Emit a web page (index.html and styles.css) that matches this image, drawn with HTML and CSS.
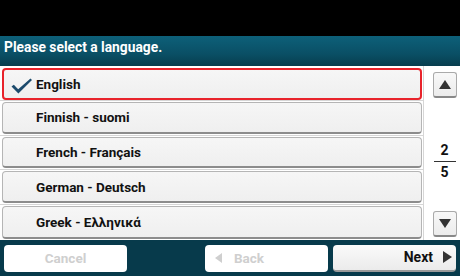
FILE: index.html
```html
<!DOCTYPE html>
<html lang="en">
<head>
    <meta charset="UTF-8">
    <title>Language</title>
    <link rel="stylesheet" href="styles.css">
</head>
<body>
    <div class="screen">
        <div class="status-bar"></div>
        <div class="title-bar">Please select a language.</div>

        <div class="content">
            <div class="lang-list">
                <div class="lang-cell">
                    <a href="#" class="lang-btn selected">
                        <svg class="check" width="22" height="16" viewBox="0 0 22 16">
                            <path d="M0.5 8.5 L2.8 6.8 L7.2 11.2 L19.5 0.5 L21 2 L7.4 15.5 Z" fill="#1c4a6c"/>
                        </svg>
                        English
                    </a>
                </div>
                <div class="lang-cell"><a href="#" class="lang-btn">Finnish - suomi</a></div>
                <div class="lang-cell"><a href="#" class="lang-btn">French - Français</a></div>
                <div class="lang-cell"><a href="#" class="lang-btn">German - Deutsch</a></div>
                <div class="lang-cell"><a href="#" class="lang-btn">Greek - Ελληνικά</a></div>
            </div>

            <div class="scroll-col">
                <a href="#" class="scroll-btn"><span class="tri-up"></span></a>
                <div class="page-num">
                    <span>2</span>
                    <span class="page-total">5</span>
                </div>
                <a href="#" class="scroll-btn"><span class="tri-down"></span></a>
            </div>
        </div>

        <div class="footer">
            <a href="#" class="foot-btn disabled">Cancel</a>
            <span class="foot-spacer"></span>
            <a href="#" class="foot-btn disabled back"><span class="tri-left"></span>Back</a>
            <a href="#" class="foot-btn next">Next<span class="tri-right"></span></a>
        </div>
    </div>
</body>
</html>
```

FILE: styles.css
```css
* {
    margin: 0;
    padding: 0;
    box-sizing: border-box;
}

body {
    font-family: Roboto, 'Liberation Sans', Arial, sans-serif;
    background: #000;
    width: 460px;
    height: 276px;
    overflow: hidden;
}

a {
    text-decoration: none;
    color: inherit;
}

.screen {
    display: flex;
    flex-direction: column;
    height: 276px;
}

.status-bar {
    height: 36px;
    background: #000;
}

.title-bar {
    height: 30px;
    padding: 3px 0 0 4px;
    color: #fff;
    font-weight: bold;
    font-size: 13.8px;
    background: linear-gradient(#0d6079, #0a4f65 60%, #073d4e);
}

.content {
    display: flex;
    background: #fff;
    height: 174px;
}

.lang-list {
    width: 424px;
    border-right: 1px solid #d6d6d6;
    display: flex;
    flex-direction: column;
}

.lang-cell {
    height: 35px;
    padding: 1px 1px 1px 2px;
    border-bottom: 1px solid #d6d6d6;
}

.lang-cell:first-child {
    padding-top: 2px;
    padding-bottom: 0;
}

.lang-cell:last-child {
    border-bottom: none;
}

.lang-btn {
    display: flex;
    align-items: center;
    height: 100%;
    padding-left: 33px;
    background: linear-gradient(#f6f6f6, #efefef);
    border: 1px solid #b5b5b5;
    border-bottom: 2px solid #8c8c8c;
    border-radius: 4px;
    font-weight: bold;
    font-size: 13.5px;
    color: #111;
    position: relative;
}

.lang-btn.selected {
    border: 2px solid #e8232b;
    padding-left: 32px;
}

.check {
    position: absolute;
    left: 7px;
    top: 8px;
}

.scroll-col {
    flex: 1;
    display: flex;
    flex-direction: column;
    align-items: center;
    justify-content: space-between;
    padding: 6px 0 3px 5px;
}

.scroll-btn {
    width: 24px;
    height: 26px;
    display: flex;
    align-items: center;
    justify-content: center;
    background: linear-gradient(#f8f8f8, #ececec);
    border: 1px solid #aaa;
    border-bottom: 2px solid #888;
    border-radius: 3px;
}

.tri-up {
    border-left: 6px solid transparent;
    border-right: 6px solid transparent;
    border-bottom: 9px solid #333;
}

.tri-down {
    border-left: 6px solid transparent;
    border-right: 6px solid transparent;
    border-top: 9px solid #333;
}

.page-num {
    display: flex;
    flex-direction: column;
    align-items: center;
    font-weight: bold;
    font-size: 14px;
    color: #111;
    line-height: 15px;
    margin-top: 14px;
}

.page-total {
    border-top: 1px solid #333;
    width: 22px;
    text-align: center;
    padding-top: 3px;
    margin-top: 3px;
}

.footer {
    flex: 1;
    display: flex;
    align-items: center;
    gap: 5px;
    padding: 0 4px;
    background: #073a4b;
}

.foot-btn {
    width: 123px;
    height: 27px;
    display: flex;
    align-items: center;
    justify-content: center;
    background: #fff;
    border-radius: 4px;
    font-weight: bold;
    font-size: 13.5px;
    color: #111;
}

.foot-btn.disabled {
    color: #cfcfcf;
}

.foot-spacer {
    flex: 1;
}

.foot-btn.back {
    justify-content: flex-start;
    padding-left: 10px;
}

.tri-left {
    border-top: 5px solid transparent;
    border-bottom: 5px solid transparent;
    border-right: 7px solid #cfcfcf;
    margin-right: 12px;
}

.foot-btn.next {
    justify-content: flex-end;
    padding-right: 4px;
    background: linear-gradient(#fafafa, #ebebeb);
    border-bottom: 2px solid #9a9a9a;
    font-size: 14px;
}

.tri-right {
    border-top: 6px solid transparent;
    border-bottom: 6px solid transparent;
    border-left: 9px solid #333;
    margin-left: 10px;
}
```
